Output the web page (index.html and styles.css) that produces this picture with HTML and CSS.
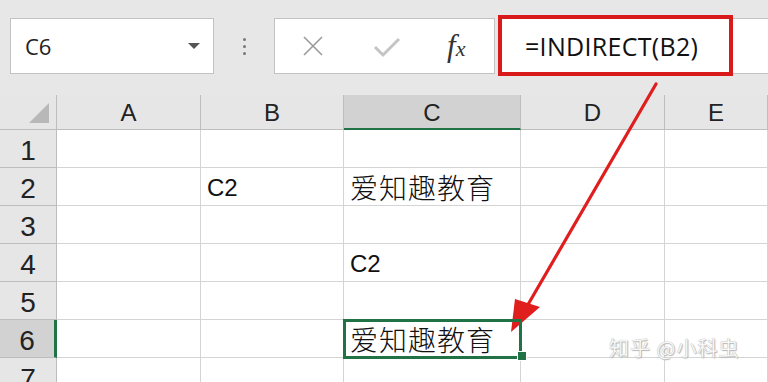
FILE: index.html
```html
<!DOCTYPE html>
<html lang="zh">
<head>
<meta charset="utf-8">
<link rel="stylesheet" href="styles.css">
</head>
<body>
<div class="app">
  <div class="toolbar">
    <div class="namebox">
      <span class="name">C6</span>
      <span class="caret"></span>
    </div>
    <div class="dots"><i></i><i></i><i></i></div>
    <div class="fbuttons">
      <svg class="ico-x" width="24" height="20" viewBox="0 0 24 20"><path d="M3 1 L21 19 M21 1 L3 19" stroke="#9a9a9a" stroke-width="1.6" fill="none"/></svg>
      <svg class="ico-check" width="28" height="22" viewBox="0 0 28 22"><path d="M2 11 L10 19 L26 3" stroke="#c4c4c4" stroke-width="3" fill="none"/></svg>
      <span class="fx"><span class="fx-f">f</span><span class="fx-x">x</span></span>
    </div>
    <div class="finput">
      <span class="ftext">=INDIRECT(B2)</span>
    </div>
  </div>

  <div class="sheet">
    <div class="hd corner"><span class="tri"></span></div>
    <div class="hd col">A</div>
    <div class="hd col">B</div>
    <div class="hd col sel-col">C</div>
    <div class="hd col">D</div>
    <div class="hd col">E</div>

    <div class="hd row">1</div><div class="c"></div><div class="c"></div><div class="c"></div><div class="c"></div><div class="c"></div>
    <div class="hd row">2</div><div class="c"></div><div class="c lat">C2</div><div class="c cjk">爱知趣教育</div><div class="c"></div><div class="c"></div>
    <div class="hd row">3</div><div class="c"></div><div class="c"></div><div class="c"></div><div class="c"></div><div class="c"></div>
    <div class="hd row">4</div><div class="c"></div><div class="c"></div><div class="c lat">C2</div><div class="c"></div><div class="c"></div>
    <div class="hd row">5</div><div class="c"></div><div class="c"></div><div class="c"></div><div class="c"></div><div class="c"></div>
    <div class="hd row sel-row">6</div><div class="c"></div><div class="c"></div><div class="c cjk active">爱知趣教育<span class="handle"></span></div><div class="c"></div><div class="c"></div>
    <div class="hd row">7</div><div class="c"></div><div class="c"></div><div class="c"></div><div class="c"></div><div class="c"></div>
  </div>

  <div class="redbox"></div>
  <svg class="arrow" width="768" height="382" viewBox="0 0 768 382">
    <line x1="656" y1="84" x2="526" y2="308" stroke="#e01e1e" stroke-width="3.2" stroke-linecap="round"/>
    <polygon points="511,332 515,299 540,307" fill="#e01e1e"/>
  </svg>
  <div class="watermark">知乎 @小科虫</div>
</div>
</body>
</html>
```

FILE: styles.css
```css
* { box-sizing: border-box; }
html, body { margin: 0; padding: 0; }
body {
  width: 768px;
  height: 382px;
  overflow: hidden;
  background: #e6e6e6;
  font-family: "Liberation Sans", "Noto Sans CJK SC", sans-serif;
}
.app { position: relative; width: 768px; height: 382px; overflow: hidden; }

.toolbar {
  height: 95px;
  display: flex;
  align-items: flex-start;
  padding: 18px 0 0 10px;
  background: #e7e7e7;
}
.namebox {
  width: 204px;
  height: 56px;
  background: #fff;
  border: 1px solid #c3c3c3;
  display: flex;
  align-items: center;
  justify-content: space-between;
  padding: 0 13px 0 14px;
}
.name {
  font-family: "Open Sans", "Liberation Sans", sans-serif;
  font-size: 22px;
  color: #222;
}
.caret {
  width: 0; height: 0;
  border-left: 6px solid transparent;
  border-right: 6px solid transparent;
  border-top: 6px solid #555;
}
.dots {
  width: 60px;
  height: 56px;
  display: flex;
  flex-direction: column;
  align-items: center;
  justify-content: center;
  gap: 4px;
}
.dots i { width: 3px; height: 3px; background: #777; border-radius: 50%; }
.fbuttons {
  width: 221px;
  height: 56px;
  background: #fff;
  border: 1px solid #c3c3c3;
  display: flex;
  align-items: center;
  padding-left: 26px;
}
.ico-x { margin-right: 48px; }
.ico-check { margin-right: 46px; margin-top: 2px; }
.fx {
  font-family: "Liberation Serif", serif;
  font-style: italic;
  color: #333;
  display: flex;
  align-items: baseline;
}
.fx-f { font-size: 31px; }
.fx-x { font-size: 22px; margin-left: 0; }
.finput {
  margin-left: 3px;
  flex: 1;
  height: 56px;
  background: #fff;
  border: 1px solid #c3c3c3;
  border-right: none;
  display: flex;
  align-items: center;
  padding-left: 26px;
}
.ftext {
  font-family: "Open Sans", "Liberation Sans", sans-serif;
  font-size: 25px;
  color: #111;
  letter-spacing: 0.3px;
}

.sheet {
  display: grid;
  grid-template-columns: 57px 144px 143px 177px 144px 1fr;
  grid-template-rows: 35px repeat(7, 38px);
  background: #fff;
}
.hd {
  background: #e6e6e6;
  color: #222;
  border-right: 1px solid #bdbdbd;
  border-bottom: 1px solid #bdbdbd;
  display: flex;
  align-items: center;
  justify-content: center;
  font-family: "Liberation Sans", sans-serif;
}
.col { font-size: 24px; padding-top: 2px; }
.row { font-size: 28px; padding-top: 4px; }
.corner { justify-content: flex-end; align-items: flex-end; padding: 0 7px 6px 0; }
.tri {
  width: 0; height: 0;
  border-left: 20px solid transparent;
  border-bottom: 20px solid #b8b8b8;
}
.sel-col { background: #d2d2d2; border-bottom: 2px solid #217346; }
.sel-row { background: #d2d2d2; border-right: 3px solid #217346; }

.c {
  border-right: 1px solid #d4d4d4;
  border-bottom: 1px solid #d4d4d4;
  display: flex;
  align-items: center;
  padding-left: 6px;
  color: #111;
  position: relative;
}
.lat { font-size: 24px; padding-top: 3px; }
.cjk {
  font-family: "Noto Sans CJK SC", sans-serif;
  font-weight: 300;
  font-size: 28px;
  letter-spacing: 1px;
  padding-top: 1px;
}
.active {
  outline: 3px solid #217346;
  outline-offset: -2px;
  z-index: 1;
}
.handle {
  position: absolute;
  right: -7px;
  bottom: -4px;
  width: 10px;
  height: 10px;
  background: #217346;
  border: 1px solid #fff;
}

.redbox {
  position: absolute;
  left: 498px;
  top: 15px;
  width: 235px;
  height: 61px;
  border: 4px solid #d91a1a;
}
.arrow { position: absolute; left: 0; top: 0; pointer-events: none; }
.watermark {
  position: absolute;
  left: 609px;
  top: 333px;
  font-family: "Noto Sans CJK SC", sans-serif;
  font-size: 20px;
  color: #f6f6f6;
  text-shadow: 0 0 1px #9a9a9a, 1px 1px 1px #bbb;
  letter-spacing: 1px;
}
```
